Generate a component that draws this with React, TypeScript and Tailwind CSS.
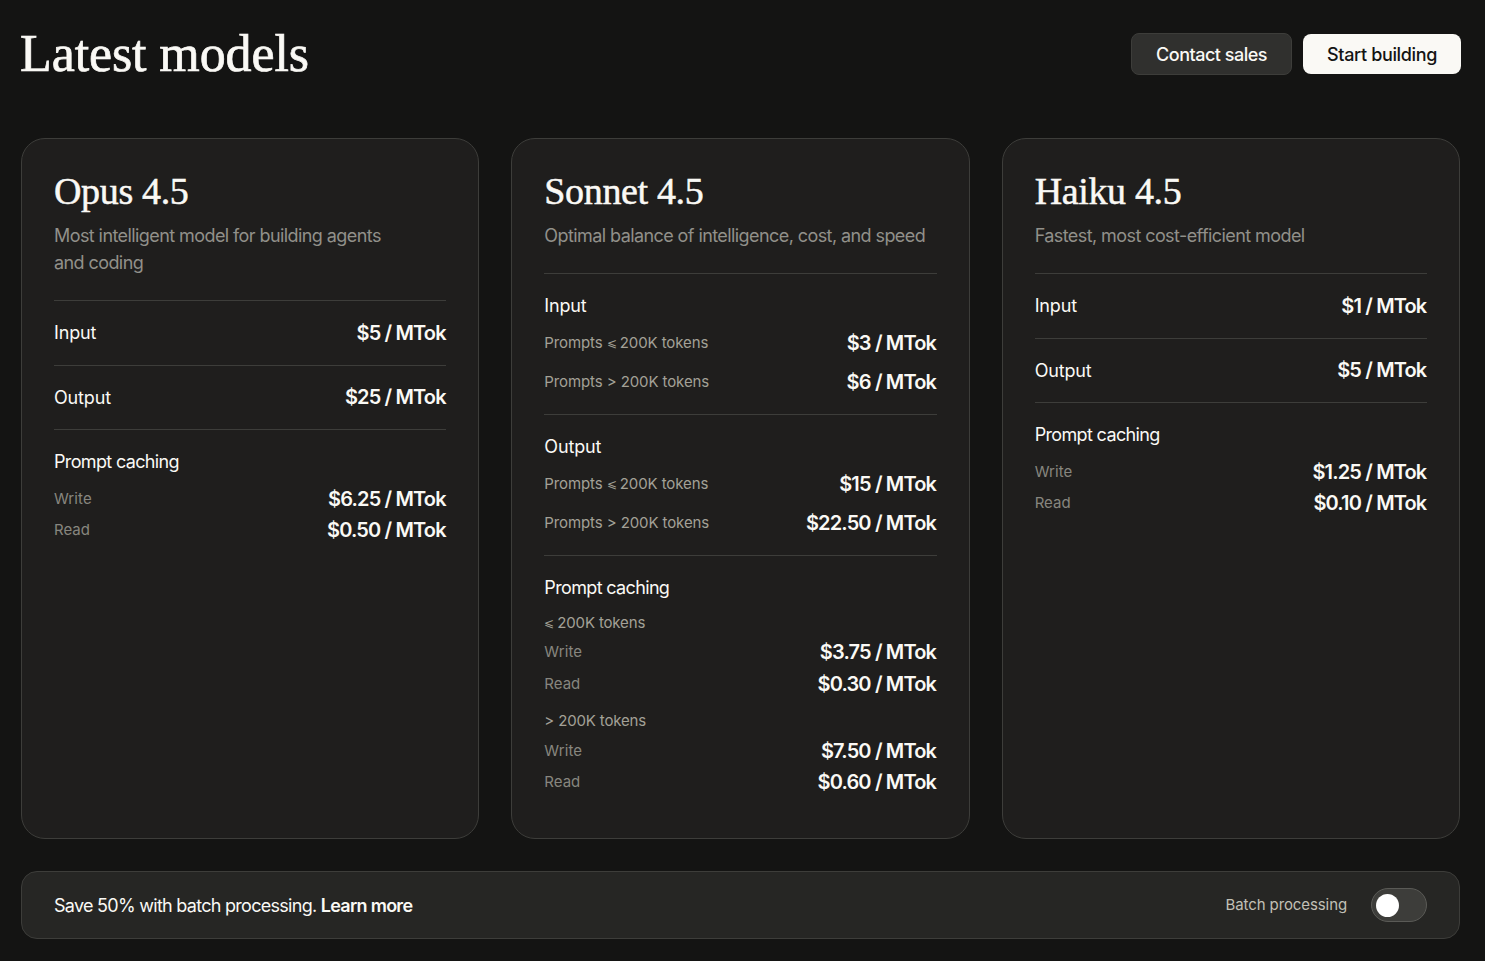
const sans = "font-['Inter','Noto_Sans',sans-serif]"
const serif = "font-['Liberation_Serif',serif]"

function Price({ value }: { value: string }) {
  return (
    <span className="mr-[0.6px] whitespace-nowrap text-[20px] leading-[28px] font-semibold tracking-[-0.85px] text-[#faf9f5]">
      {value}
    </span>
  )
}

function PlainRow({ label, value }: { label: string; value: string }) {
  return (
    <div className="flex items-center justify-between border-t border-[#3d3d3a] py-[17.75px]">
      <span className="text-[18px] leading-[27px] tracking-[-0.15px] text-[#faf9f5]">{label}</span>
      <Price value={value} />
    </div>
  )
}

// the slanted glyph runs wide in the fallback font, so it gets a smaller size
function Lte() {
  return <span className="-mr-[1px] align-[1px] text-[12px] leading-none">⩽</span>
}

function TierRow({ label, value }: { label: React.ReactNode; value: string }) {
  return (
    <div className="flex items-center justify-between">
      <span className="text-[15px] leading-[28px] tracking-[-0.1px] text-[#a3a197]">{label}</span>
      <Price value={value} />
    </div>
  )
}

function TierSection({ title, rows }: { title: string; rows: [React.ReactNode, string][] }) {
  return (
    <div className="border-t border-[#3d3d3a] py-[18px]">
      <div className="text-[18px] leading-[27px] tracking-[-0.15px] text-[#faf9f5]">{title}</div>
      <div className="mt-[10px] flex flex-col gap-[11px]">
        {rows.map(([label, value]) => (
          <TierRow key={value} label={label} value={value} />
        ))}
      </div>
    </div>
  )
}

function CacheRows({ write, read, className }: { write: string; read: string; className?: string }) {
  return (
    <div className={className}>
      <div className="flex items-center justify-between">
        <span className="text-[15px] leading-[28px] tracking-[0.1px] text-[#87867f]">Write</span>
        <Price value={write} />
      </div>
      <div className="mt-[3.5px] flex items-center justify-between">
        <span className="text-[15px] leading-[28px] text-[#87867f]">Read</span>
        <Price value={read} />
      </div>
    </div>
  )
}

function CachingTitle() {
  return <div className="text-[18px] leading-[27px] tracking-[-0.65px] text-[#faf9f5]">Prompt caching</div>
}

function Card({ name, desc, children }: { name: string; desc: React.ReactNode; children: React.ReactNode }) {
  return (
    <div className="h-[701px] rounded-[24px] border border-[#3d3d3a] bg-[#1f1e1d] px-8 pt-8">
      <h2 className={`${serif} text-[38px] leading-[40px] tracking-[-0.35px] text-[#faf9f5] [-webkit-text-stroke:0.5px_#faf9f5]`}>
        {name}
      </h2>
      <p className="mt-[11px] pb-[24px] text-[18px] leading-[27px] tracking-[-0.58px] text-[#91908a]">{desc}</p>
      {children}
    </div>
  )
}

export default function App() {
  return (
    <div className={`${sans} h-[961px] overflow-hidden bg-[#141413] pt-[33px] pr-[25px] pl-[21px]`}>
      <header className="-mr-px flex h-[42px] items-center justify-between">
        <h1 className={`${serif} -ml-px text-[52px] leading-[42px] tracking-[-0.1px] text-[#faf9f5] [-webkit-text-stroke:0.7px_#faf9f5]`}>
          Latest models
        </h1>
        <div className="flex items-center gap-[11px]">
          <button className="h-[42px] w-[161px] rounded-[8px] border border-[#3d3d3a] bg-[#30302e] text-[18px] font-medium tracking-[-0.5px] text-[#faf9f5]">
            Contact sales
          </button>
          <button className="h-[40px] w-[158px] rounded-[8px] bg-[#faf9f5] text-[18px] font-medium tracking-[-0.35px] text-[#141413]">
            Start building
          </button>
        </div>
      </header>

      <div className="mt-[63px] grid grid-cols-3 gap-8">
        <Card
          name="Opus 4.5"
          desc={
            <>
              Most intelligent model for building agents
              <br />
              and coding
            </>
          }
        >
          <PlainRow label="Input" value="$5 / MTok" />
          <PlainRow label="Output" value="$25 / MTok" />
          <div className="border-t border-[#3d3d3a] pt-[18px]">
            <CachingTitle />
            <CacheRows className="mt-[9.5px]" write="$6.25 / MTok" read="$0.50 / MTok" />
          </div>
        </Card>

        <Card name="Sonnet 4.5" desc="Optimal balance of intelligence, cost, and speed">
          <TierSection
            title="Input"
            rows={[
              [<>Prompts <Lte /> 200K tokens</>, "$3 / MTok"],
              ["Prompts > 200K tokens", "$6 / MTok"],
            ]}
          />
          <TierSection
            title="Output"
            rows={[
              [<>Prompts <Lte /> 200K tokens</>, "$15 / MTok"],
              ["Prompts > 200K tokens", "$22.50 / MTok"],
            ]}
          />
          <div className="border-t border-[#3d3d3a] pt-[18px]">
            <CachingTitle />
            <div className="mt-[9.5px] text-[15px] leading-[24px] tracking-[-0.15px] text-[#a3a197]">
              <Lte /> 200K tokens
            </div>
            <CacheRows className="mt-[3.5px]" write="$3.75 / MTok" read="$0.30 / MTok" />
            <div className="mt-[11px] text-[15px] leading-[24px] tracking-[-0.15px] text-[#a3a197]">&gt; 200K tokens</div>
            <CacheRows className="mt-[4px]" write="$7.50 / MTok" read="$0.60 / MTok" />
          </div>
        </Card>

        <Card name="Haiku 4.5" desc="Fastest, most cost-efficient model">
          <PlainRow label="Input" value="$1 / MTok" />
          <PlainRow label="Output" value="$5 / MTok" />
          <div className="border-t border-[#3d3d3a] pt-[18px]">
            <CachingTitle />
            <CacheRows className="mt-[9.5px]" write="$1.25 / MTok" read="$0.10 / MTok" />
          </div>
        </Card>
      </div>

      <div className="mt-8 flex h-[68px] items-center justify-between rounded-[16px] border border-[#3d3d3a] bg-[#262624] px-8">
        <p className="text-[18px] tracking-[-0.72px] text-[#faf9f5]">
          Save 50% with batch processing. <span className="font-semibold">Learn more</span>
        </p>
        <div className="flex items-center gap-[24px]">
          <span className="text-[15px] tracking-[-0.1px] text-[#c2c0b6]">Batch processing</span>
          <div className="flex h-[34px] w-[56px] items-center rounded-full border border-[#5a5a56] bg-[#3d3d3a] pl-[4px]">
            <div className="size-[23px] rounded-full bg-white" />
          </div>
        </div>
      </div>
    </div>
  )
}
